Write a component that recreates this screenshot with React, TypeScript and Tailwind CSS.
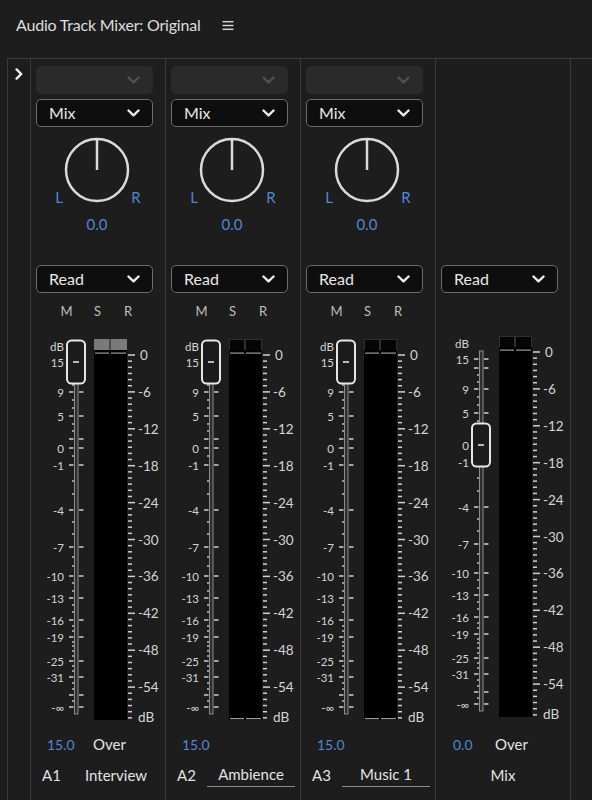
import React from "react";

const BLUE = "#5088d4";

// fader scale: [y, label] in px from the top of the fader drawing
const leftMajors: [number, string][] = [
  [32, "15"], [41, ""], [62, "9"], [86, "5"], [109, ""], [118, "0"], [135, "-1"],
  [180, "-4"], [217, "-7"], [246, "-10"], [268, "-13"], [290, "-16"], [307, "-19"],
  [331, "-25"], [347, "-31"], [365, ""], [377, "-∞"],
];
const leftMinors = [
  48, 55, 70, 78, 94, 101, 126, 151, 164, 192, 204, 227, 236, 253, 261, 275, 282,
  296, 301, 312, 316, 321, 326, 336, 341, 353, 359, 371,
];

type Channel = {
  id: string;
  name: string;
  gain: string;
  over: boolean;
  peakLit: boolean;
  underline: boolean;
};

const channels: Channel[] = [
  { id: "A1", name: "Interview", gain: "15.0", over: true, peakLit: true, underline: false },
  { id: "A2", name: "Ambience", gain: "15.0", over: false, peakLit: false, underline: true },
  { id: "A3", name: "Music 1", gain: "15.0", over: false, peakLit: false, underline: true },
];

function Chevron({ color = "#f0f0f0" }: { color?: string }) {
  return (
    <svg width="13" height="8" viewBox="0 0 13 8">
      <path d="M1.5 1.5 L6.5 6.3 L11.5 1.5" fill="none" stroke={color} strokeWidth="2.4" strokeLinecap="round" strokeLinejoin="round" />
    </svg>
  );
}

function Dropdown({ label, disabled }: { label?: string; disabled?: boolean }) {
  if (disabled) {
    return (
      <div className="ml-[5px] w-[117px] h-[28px] rounded-[5px] bg-[#2a2a2a] flex items-center justify-end pr-[13px]">
        <Chevron color="#505050" />
      </div>
    );
  }
  return (
    <div className="ml-[5px] w-[117px] h-[28px] rounded-[5px] bg-[#0e0e0e] border-[1.5px] border-[#6c6c6c] flex items-center justify-between pl-[12px] pr-[12px] text-[16px] text-[#e8e8e8]">
      <span>{label}</span>
      <Chevron />
    </div>
  );
}

function PanKnob() {
  return (
    <svg width="134" height="138" viewBox="1 0 134 138">
      <circle cx="67" cy="43" r="31" fill="none" stroke="#dadada" strokeWidth="2.5" />
      <line x1="67" y1="12" x2="67" y2="43" stroke="#dadada" strokeWidth="2.5" />
      <g fill={BLUE} fontSize="15" textAnchor="middle" dominantBaseline="central">
        <text x="29" y="70">L</text>
        <text x="106" y="70">R</text>
        <text x="67" y="97">0.0</text>
      </g>
    </svg>
  );
}

function Fader({ knobY, peakLit, bottomLines, dy = 0 }: { knobY: number; peakLit: boolean; bottomLines: boolean; dy?: number }) {
  const rightTicks = [];
  for (let d = 0; d <= 59; d++) {
    const y = 25 + d * 6.15;
    rightTicks.push(
      <rect key={d} x="98" y={y - 0.75} width={d % 6 === 0 ? 7 : 4} height="1.5" fill="#cfcfcf" />
    );
  }
  return (
    <svg width="134" height="400" viewBox="1 0 134 400">
      <g transform={`translate(0,${dy})`}>
        <text x="27" y="16" fontSize="11.5" fill="#d4d4d4" textAnchor="middle" dominantBaseline="central">dB</text>
        <rect x="44.5" y="24" width="3.5" height="360" fill="#2e2e2e" stroke="#8c8c8c" strokeWidth="1" />
        {leftMajors.map(([y, l]) => (
          <g key={y}>
            <rect x="39" y={y - 0.75} width="4.5" height="1.5" fill="#d0d0d0" />
            <rect x="49" y={y - 0.75} width="4.5" height="1.5" fill="#d0d0d0" />
            {l && (
              <text x="34" y={y} fontSize="11.5" fill="#d4d4d4" textAnchor="end" dominantBaseline="central">
                {l}
              </text>
            )}
          </g>
        ))}
        {leftMinors.map((y) => (
          <rect key={y} x="42" y={y - 0.75} width="2" height="1.5" fill="#bdbdbd" />
        ))}
        <rect x="37" y={knobY - 21.5} width="18" height="43" rx="4.5" fill="#1b1b1b" stroke="#e6e6e6" strokeWidth="2" />
        <rect x="43" y={knobY - 0.75} width="6" height="1.5" fill="#eeeeee" />

        {peakLit ? (
          <>
            <rect x="64" y="9" width="15.5" height="11" fill="#7a7a7a" />
            <rect x="80.5" y="9" width="16.5" height="11" fill="#7a7a7a" />
          </>
        ) : (
          <>
            <rect x="64.5" y="9.5" width="15" height="11" fill="#050505" stroke="#303030" />
            <rect x="80.5" y="9.5" width="16" height="11" fill="#050505" stroke="#303030" />
          </>
        )}
        <rect x="64" y="20" width="33" height="370" fill="#000" />
        <rect x="65" y="22.5" width="14" height="1.2" fill="#9a9a9a" />
        <rect x="81" y="22.5" width="15" height="1.2" fill="#9a9a9a" />
        {bottomLines && (
          <>
            <rect x="65" y="388" width="14" height="1.2" fill="#9a9a9a" />
            <rect x="81" y="388" width="15" height="1.2" fill="#9a9a9a" />
          </>
        )}
        {rightTicks}
        <g fontSize="13.5" fill="#d4d4d4" dominantBaseline="central">
          {[0, 6, 12, 18, 24, 30, 36, 42, 48, 54].map((d) => (
            <text key={d} x={d === 0 ? 110 : 108} y={25 + d * 6.15}>
              {d === 0 ? "0" : `-${d}`}
            </text>
          ))}
          <text x="108" y="387">dB</text>
        </g>
      </g>
    </svg>
  );
}

function TrackStrip({ ch }: { ch: Channel }) {
  return (
    <div className="w-[135px] shrink-0 border-l border-[#3a3a3a] flex flex-col">
      <div className="mt-[7px]">
        <Dropdown disabled />
      </div>
      <div className="mt-[5px]">
        <Dropdown label="Mix" />
      </div>
      <PanKnob />
      <Dropdown label="Read" />
      <div className="h-[37px] flex items-center text-[13px] text-[#bdbdbd]">
        <span className="w-[31px] ml-[20px] text-center">M</span>
        <span className="w-[31px] text-center">S</span>
        <span className="w-[30px] text-center">R</span>
      </div>
      <Fader knobY={32} peakLit={ch.peakLit} bottomLines={!ch.peakLit} />
      <div className="h-[28px] flex items-center">
        <span className="ml-[16px] w-[46px] text-[14px] text-[#5088d4]">{ch.gain}</span>
        {ch.over && <span className="text-[15px] text-[#e3e3e3]">Over</span>}
      </div>
      <div className="h-[34px] flex items-center text-[15px] text-[#e3e3e3]">
        <span className="ml-[11px] w-[30px]">{ch.id}</span>
        <span
          className={
            "w-[88px] h-[24px] flex items-center justify-center " +
            (ch.underline ? "border-b border-[#8a8a8a]" : "")
          }
        >
          {ch.name}
        </span>
      </div>
    </div>
  );
}

function MixStrip() {
  return (
    <div className="w-[135px] shrink-0 border-l border-[#3a3a3a] flex flex-col">
      <div className="mt-[206px]">
        <Dropdown label="Read" />
      </div>
      <div className="h-[37px]" />
      <Fader knobY={118} peakLit={false} bottomLines={false} dy={-3} />
      <div className="h-[28px] flex items-center">
        <span className="ml-[17px] w-[42px] text-[14px] text-[#5088d4]">0.0</span>
        <span className="text-[15px] text-[#e3e3e3]">Over</span>
      </div>
      <div className="h-[34px] flex items-center justify-center text-[15px] text-[#e3e3e3]">Mix</div>
    </div>
  );
}

export default function App() {
  return (
    <div className="w-[592px] h-[800px] overflow-hidden bg-[#1d1d1d] flex flex-col font-[Lato,sans-serif]">
      <div className="h-[58px] shrink-0 flex items-center pb-[8px] pl-[16px] gap-[21px]">
        <span className="text-[16px] tracking-[-0.2px] text-[#dedede]">Audio Track Mixer: Original</span>
        <svg width="12" height="11" viewBox="0 0 12 11">
          <g fill="#d8d8d8">
            <rect x="0.5" y="1" width="11" height="1.4" />
            <rect x="0.5" y="4.8" width="11" height="1.4" />
            <rect x="0.5" y="8.6" width="11" height="1.4" />
          </g>
        </svg>
      </div>
      <div className="flex-1 ml-[7px] flex border-t border-l border-[#3a3a3a]">
        <div className="w-[22px] shrink-0 flex justify-center pt-[9px]">
          <svg width="8" height="12" viewBox="0 0 8 12">
            <path d="M1.6 1.4 L6.2 6 L1.6 10.6" fill="none" stroke="#f2f2f2" strokeWidth="2.4" strokeLinecap="round" strokeLinejoin="round" />
          </svg>
        </div>
        {channels.map((ch) => (
          <TrackStrip key={ch.id} ch={ch} />
        ))}
        <MixStrip />
        <div className="flex-1 border-l border-[#3a3a3a]" />
      </div>
    </div>
  );
}
